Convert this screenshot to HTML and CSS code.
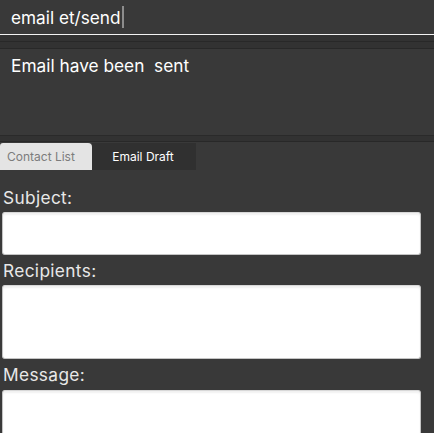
FILE: index.html
```html
<!DOCTYPE html>
<html>
<head>
<meta charset="utf-8">
<link rel="stylesheet" href="styles.css">
</head>
<body>
<div class="cmd"><span class="cmd-text">email et/send</span><span class="caret"></span></div>
<div class="sep"><div class="sep-band"></div><div class="sep-band"></div></div>
<div class="result">Email have been  sent</div>
<div class="sep sep-lower"><div class="sep-band"></div></div>
<div class="tabs">
  <div class="tab tab-inactive">Contact List</div>
  <div class="tab tab-active">Email Draft</div>
</div>
<div class="form">
  <div class="label label-first">Subject:</div>
  <div class="field field-subject"></div>
  <div class="label">Recipients:</div>
  <div class="field field-recipients"></div>
  <div class="label label-message">Message:</div>
  <div class="field field-message"></div>
</div>
</body>
</html>
```
FILE: styles.css
```css
html, body {
  margin: 0;
  padding: 0;
  background: #393939;
  font-family: "Inter", "Liberation Sans", Arial, sans-serif;
  overflow: hidden;
  height: 433px;
}

.cmd {
  height: 33px;
  padding-top: 1px;
  border-bottom: 1px solid #f2f2f2;
  padding-left: 11px;
  display: flex;
  align-items: center;
  color: #ffffff;
  font-size: 17.2px;
}

.cmd-text {
  line-height: 22px;
}

.caret {
  display: inline-block;
  width: 2px;
  height: 22px;
  background: #8d8d8d;
  margin-left: 1px;
  margin-bottom: 1px;
}

.sep {
  display: flex;
  flex-direction: column;
}

.sep-band {
  height: 6px;
  background: #323232;
  border-bottom: 1px solid #282828;
}

.sep-lower {
  border-top: 1px solid #2a2a2a;
  margin-bottom: 1px;
}

.sep-lower .sep-band {
  height: 5px;
}

.result {
  height: 80px;
  padding: 6px 11px 0;
  color: #ffffff;
  font-size: 17.3px;
  line-height: 22px;
  white-space: pre;
}

.tabs {
  display: flex;
  height: 27px;
}

.tab {
  font-size: 12px;
  line-height: 27px;
  height: 27px;
}

.tab-inactive {
  width: 92px;
  padding-left: 7px;
  box-sizing: border-box;
  background: #e4e4e4;
  color: #7c7c7c;
  border-radius: 3px 4px 0 0;
}

.tab-active {
  width: 104px;
  text-align: center;
  padding-right: 2px;
  box-sizing: border-box;
  background: #303030;
  color: #ffffff;
}

.form {
  display: flex;
  flex-direction: column;
  padding: 0 13px 0 2px;
}

.label {
  color: #e8e8e8;
  font-size: 17.3px;
  letter-spacing: 0.35px;
  line-height: 22px;
  padding-left: 1px;
  margin-top: 5px;
  margin-bottom: 3px;
}

.label-first {
  margin-top: 17px;
}

.label-message {
  margin-top: 5px;
  margin-bottom: 4px;
}

.field {
  background: #ffffff;
  border: 1px solid #c4c4c4;
  border-top-color: #d8d8d8;
  border-radius: 3px;
  box-shadow: inset 0 2px 2px rgba(0, 0, 0, 0.06);
  box-sizing: border-box;
}

.field-subject {
  height: 43px;
}

.field-recipients {
  height: 74px;
}

.field-message {
  height: 60px;
}
```
